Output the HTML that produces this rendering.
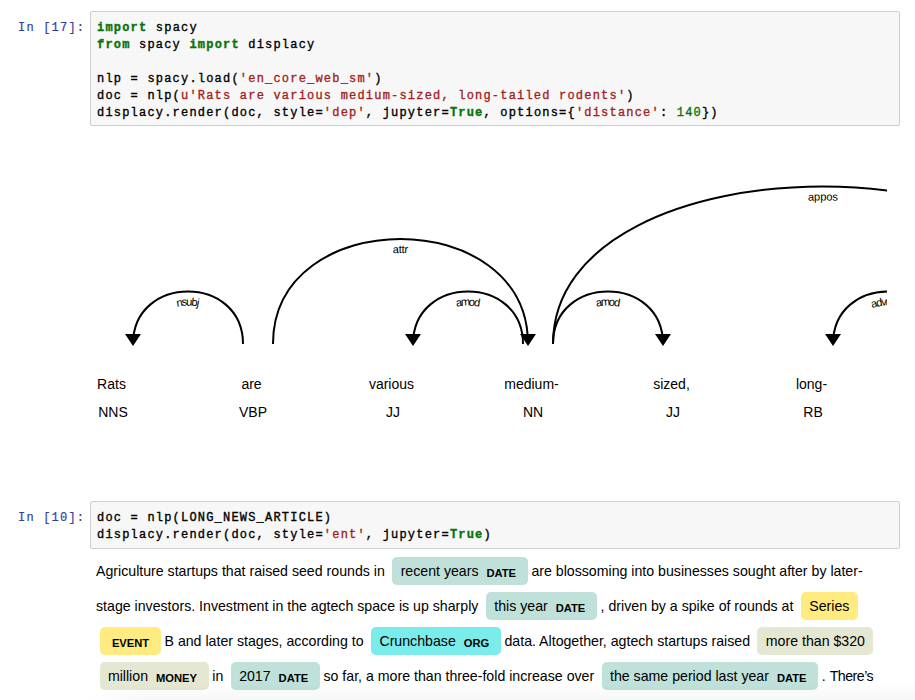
<!DOCTYPE html>
<html><head><meta charset="utf-8">
<style>
html,body{margin:0;padding:0;background:#fff;width:915px;height:700px;overflow:hidden;position:relative;}
.prompt{position:absolute;left:18px;font-family:"Liberation Mono",monospace;font-size:12px;letter-spacing:1.2px;line-height:17px;color:#303F9F;white-space:pre;-webkit-text-stroke:0.2px;}
.box{position:absolute;left:90px;width:808px;border:1px solid #cfcfcf;background:#f7f7f7;border-radius:2px;}
.code{position:absolute;left:97px;font-family:"Liberation Mono",monospace;font-size:12px;letter-spacing:1.2px;line-height:17px;color:#000;white-space:pre;-webkit-text-stroke:0.35px;}
.k{color:#0a730a;font-weight:bold}
.s{color:#a31f1f}
.n{color:#0a730a}
.dep{position:absolute;left:96px;top:134px;width:791px;height:345px;overflow:hidden;}
.dep svg{position:absolute;left:-33px;top:0;font-family:"Liberation Sans",sans-serif;font-size:14px;}
.ents{position:absolute;left:96px;font-family:"Liberation Sans",sans-serif;font-size:14.17px;color:#000;white-space:nowrap;}
.line{position:absolute;left:0;height:35px;line-height:35px;}
mark{padding:6.3px 8.4px;margin:0 3.5px;line-height:1;border-radius:4.9px;color:#000;}
mark.l{padding-right:11.8px;}
mark span{font-size:11.2px;font-weight:bold;line-height:1;text-transform:uppercase;vertical-align:middle;margin-left:4px;position:relative;top:1px;}
</style></head><body>
<div class="prompt" style="top:20px">In [17]:</div>
<div class="box" style="top:11px;height:113px"></div>
<div class="code" style="top:20px"><span class="k">import</span> spacy
<span class="k">from</span> spacy <span class="k">import</span> displacy

nlp = spacy.load(<span class="s">'en_core_web_sm'</span>)
doc = nlp(<span class="s">u'Rats are various medium-sized, long-tailed rodents'</span>)
displacy.render(doc, style=<span class="s">'dep'</span>, jupyter=<span class="k">True</span>, options={<span class="s">'distance'</span>: <span class="n">140</span>})</div>

<div class="dep"><svg width="1170" height="345" viewBox="0 0 1170 345">
<g transform="translate(-1.5,0)"><text fill="#000" text-anchor="middle" y="255"><tspan x="50">Rats</tspan><tspan x="51.5" dy="2em">NNS</tspan></text>
<text fill="#000" text-anchor="middle" y="255"><tspan x="190">are</tspan><tspan x="191.5" dy="2em">VBP</tspan></text>
<text fill="#000" text-anchor="middle" y="255"><tspan x="330">various</tspan><tspan x="331.5" dy="2em">JJ</tspan></text>
<text fill="#000" text-anchor="middle" y="255"><tspan x="470">medium-</tspan><tspan x="471.5" dy="2em">NN</tspan></text>
<text fill="#000" text-anchor="middle" y="255"><tspan x="610">sized,</tspan><tspan x="611.5" dy="2em">JJ</tspan></text>
<text fill="#000" text-anchor="middle" y="255"><tspan x="750">long-</tspan><tspan x="751.5" dy="2em">RB</tspan></text>
<text fill="#000" text-anchor="middle" y="255"><tspan x="890">tailed</tspan><tspan x="891.5" dy="2em">VBN</tspan></text>
<text fill="#000" text-anchor="middle" y="255"><tspan x="1030">rodents</tspan><tspan x="1031.5" dy="2em">NNS</tspan></text></g>
<path id="a0" stroke-width="2px" d="M70,210 C70,140 180,140 180,210" fill="none" stroke="#000"/>
<text dy="1.25em" style="font-size:0.8em"><textPath href="#a0" startOffset="50%" fill="#000" text-anchor="middle">nsubj</textPath></text>
<path d="M70,212 L62,200 78,200" fill="#000"/>
<path id="a1" stroke-width="2px" d="M210,210 C210,70 465,70 465,210" fill="none" stroke="#000"/>
<text dy="1.25em" style="font-size:0.8em"><textPath href="#a1" startOffset="50%" fill="#000" text-anchor="middle">attr</textPath></text>
<path d="M465,212 L473,200 457,200" fill="#000"/>
<path id="a2" stroke-width="2px" d="M350,210 C350,140 460,140 460,210" fill="none" stroke="#000"/>
<text dy="1.25em" style="font-size:0.8em"><textPath href="#a2" startOffset="50%" fill="#000" text-anchor="middle">amod</textPath></text>
<path d="M350,212 L342,200 358,200" fill="#000"/>
<path id="a3" stroke-width="2px" d="M490,210 C490,140 600,140 600,210" fill="none" stroke="#000"/>
<text dy="1.25em" style="font-size:0.8em"><textPath href="#a3" startOffset="50%" fill="#000" text-anchor="middle">amod</textPath></text>
<path d="M600,212 L608,200 592,200" fill="#000"/>
<path id="a4" stroke-width="2px" d="M490,210 C490,0 1030,0 1030,210" fill="none" stroke="#000"/>
<text dy="1.25em" style="font-size:0.8em"><textPath href="#a4" startOffset="50%" fill="#000" text-anchor="middle">appos</textPath></text>
<path d="M1030,212 L1038,200 1022,200" fill="#000"/>
<path id="a5" stroke-width="2px" d="M770,210 C770,140 880,140 880,210" fill="none" stroke="#000"/>
<text dy="1.25em" style="font-size:0.8em"><textPath href="#a5" startOffset="50%" fill="#000" text-anchor="middle">advmod</textPath></text>
<path d="M770,212 L762,200 778,200" fill="#000"/>
<path id="a6" stroke-width="2px" d="M910,210 C910,140 1020,140 1020,210" fill="none" stroke="#000"/>
<text dy="1.25em" style="font-size:0.8em"><textPath href="#a6" startOffset="50%" fill="#000" text-anchor="middle">amod</textPath></text>
<path d="M910,212 L902,200 918,200" fill="#000"/>
</svg></div>

<div class="prompt" style="top:510px">In [10]:</div>
<div class="box" style="top:501px;height:46px"></div>
<div class="code" style="top:510px">doc = nlp(LONG_NEWS_ARTICLE)
displacy.render(doc, style=<span class="s">'ent'</span>, jupyter=<span class="k">True</span>)</div>

<div class="ents" style="top:554px">
<div class="line" style="top:0">Agriculture startups that raised seed rounds in <mark class="l" style="background:#bfe1d9">recent years <span>date</span></mark>are blossoming into businesses sought after by later-</div>
<div class="line" style="top:35px">stage investors. Investment in the agtech space is up sharply <mark class="l" style="background:#bfe1d9">this year <span>date</span></mark>, driven by a spike of rounds at <mark style="background:#ffeb80">Series</mark></div>
<div class="line" style="top:70px"><mark class="l" style="background:#ffeb80"><span>event</span></mark>B and later stages, according to <mark class="l" style="background:#7aecec">Crunchbase <span>org</span></mark>data. Altogether, agtech startups raised <mark style="background:#e4e7d2">more than $320</mark></div>
<div class="line" style="top:105px"><mark class="l" style="background:#e4e7d2">million <span>money</span></mark>in <mark class="l" style="background:#bfe1d9">2017 <span>date</span></mark>so far, a more than three-fold increase over <mark class="l" style="background:#bfe1d9">the same period last year <span>date</span></mark>. <span style="letter-spacing:-0.5px">There’s</span></div>
</div>
<div style="position:absolute;left:90px;top:684px;width:825px;height:16px;background:linear-gradient(to bottom, rgba(0,0,0,0), rgba(0,0,0,0.035));-webkit-mask-image:linear-gradient(to right, transparent, #000 60px);"></div>
</body></html>
